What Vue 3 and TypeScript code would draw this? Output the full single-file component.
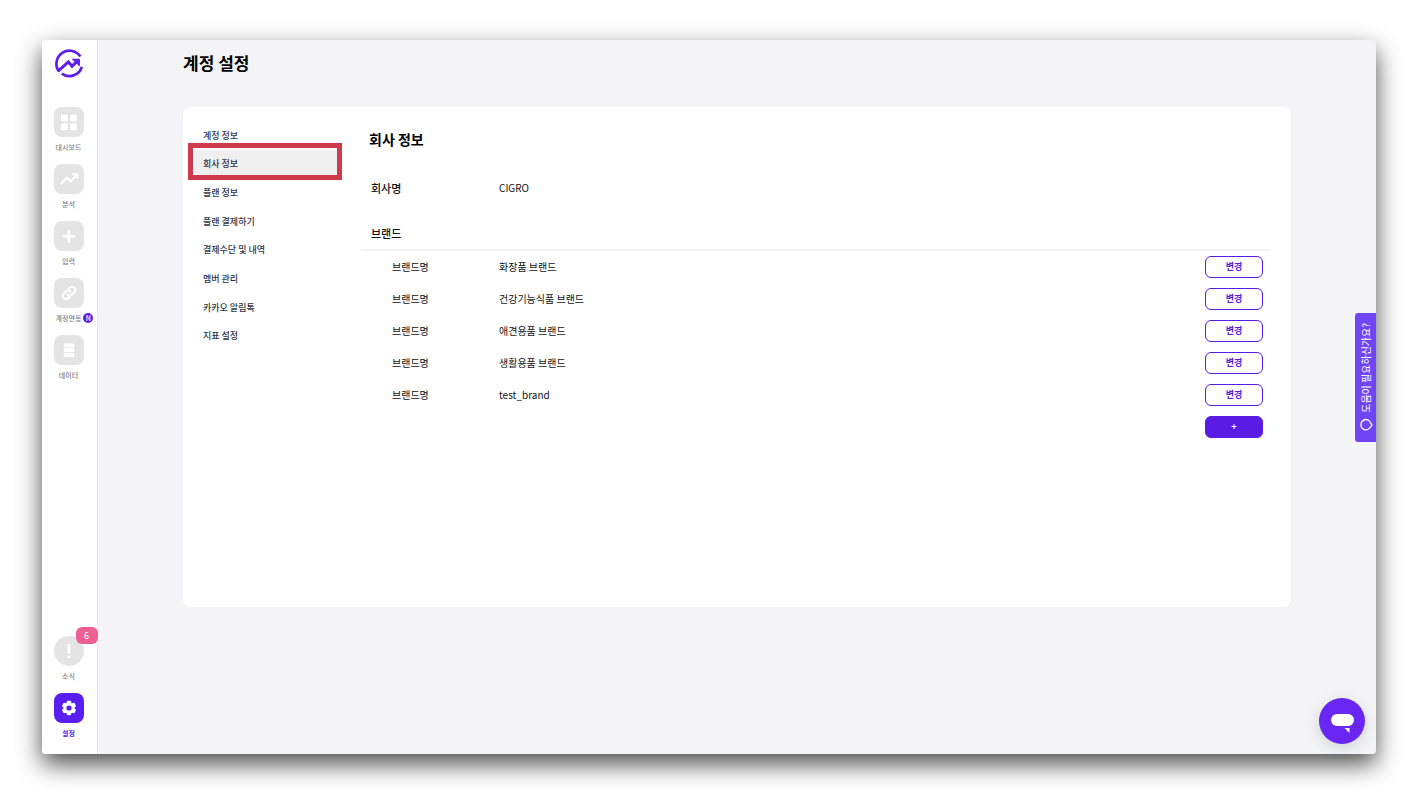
<script setup lang="ts">
import { ref } from 'vue'

interface NavItem {
  id: string
  label: string
  isNew?: boolean
}

const navItems: NavItem[] = [
  { id: 'dashboard', label: '대시보드' },
  { id: 'analysis', label: '분석' },
  { id: 'input', label: '입력' },
  { id: 'link', label: '계정연동', isNew: true },
  { id: 'data', label: '데이터' },
]

const menu: string[] = [
  '계정 정보',
  '회사 정보',
  '플랜 정보',
  '플랜 결제하기',
  '결제수단 및 내역',
  '멤버 관리',
  '카카오 알림톡',
  '지표 설정',
]
const current = ref('회사 정보')

const company = 'CIGRO'
const brands: string[] = ['화장품 브랜드', '건강기능식품 브랜드', '애견용품 브랜드', '생활용품 브랜드', 'test_brand']
</script>

<template>
  <div class="stage">
    <div class="window">
      <aside class="sidebar">
        <a class="logo" href="#" aria-label="홈">
          <svg viewBox="0 0 30 30" width="30" height="30" fill="none" stroke="#5c1ee8" stroke-width="2.7">
            <path d="M4.6 23A12.9 12.9 0 0 1 26.4 8.6" />
            <path d="M7.8 25.6A12.9 12.9 0 0 0 27.8 18.8" />
            <path d="M3.8 23.4L14.4 13.8L18 18.2L24.2 12.4" stroke-width="3" />
            <path d="M18.4 11.2H25.4V17.8Z" fill="#5c1ee8" stroke-width="1" />
          </svg>
        </a>

        <nav class="nav">
          <a v-for="item in navItems" :key="item.id" class="nav-item" href="#">
            <span class="tile">
              <svg v-if="item.id === 'dashboard'" viewBox="0 0 30 30" fill="#fff">
                <rect x="7" y="7.5" width="7" height="7" rx="1.8" />
                <rect x="16" y="7.5" width="7" height="7" rx="1.8" />
                <rect x="7" y="16.2" width="7" height="7" rx="1.8" />
                <rect x="16" y="16.2" width="7" height="7" rx="1.8" />
              </svg>
              <svg v-else-if="item.id === 'analysis'" viewBox="0 0 30 30" fill="none" stroke="#fff" stroke-width="2.2" stroke-linecap="round" stroke-linejoin="round">
                <path d="M7.5 19.5L12.6 13.6L17 17.4L22 11.4" />
                <path d="M18.6 10L23.4 9.6L23.6 14.4Z" fill="#fff" stroke-width="1.4" />
              </svg>
              <svg v-else-if="item.id === 'input'" viewBox="0 0 30 30" fill="none" stroke="#fff" stroke-width="2.6" stroke-linecap="round">
                <path d="M15 10V20.4M9.8 15.2H20.2" />
              </svg>
              <svg v-else-if="item.id === 'link'" viewBox="0 0 30 30" fill="none" stroke="#fff" stroke-width="2" stroke-linecap="round" stroke-linejoin="round">
                <path d="M13.6 16.5A3.2 3.2 0 0 0 18.2 16.5L20.4 14.3A3.25 3.25 0 0 0 15.8 9.7L14.5 11" />
                <path d="M16.4 13.5A3.2 3.2 0 0 0 11.8 13.5L9.6 15.7A3.25 3.25 0 0 0 14.2 20.3L15.5 19" />
              </svg>
              <svg v-else viewBox="0 0 30 30">
                <g fill="#fff">
                  <rect x="9.8" y="8.6" width="10.6" height="3.9" rx="1" />
                  <rect x="9.8" y="13.3" width="10.6" height="3.9" rx="1" />
                  <rect x="9.8" y="18" width="10.6" height="3.9" rx="1" />
                </g>
                <path d="M11.4 10.5H12.6M11.4 15.2H12.6M11.4 19.9H12.6" stroke="#e4e4e4" stroke-width="1" />
              </svg>
            </span>
            <span class="nav-label">{{ item.label }}<i v-if="item.isNew" class="new">N</i></span>
          </a>
        </nav>

        <div class="nav nav-bottom">
          <a class="nav-item" href="#">
            <span class="tile round">
              <svg viewBox="0 0 30 30" fill="none" stroke="#fff" stroke-width="2.8" stroke-linecap="round">
                <path d="M15 9.4V16.4M15 20.8V20.9" />
              </svg>
              <span class="count">6</span>
            </span>
            <span class="nav-label">소식</span>
          </a>
          <a class="nav-item active" href="#" aria-current="page">
            <span class="tile">
              <svg viewBox="0 0 30 30">
                <g fill="#fff">
                  <circle cx="15" cy="15" r="5.6" />
                  <rect x="12.7" y="7.8" width="4.6" height="14.4" rx="1.4" />
                  <rect x="12.7" y="7.8" width="4.6" height="14.4" rx="1.4" transform="rotate(60 15 15)" />
                  <rect x="12.7" y="7.8" width="4.6" height="14.4" rx="1.4" transform="rotate(120 15 15)" />
                </g>
                <circle cx="15" cy="15" r="2.6" fill="#5a1ff0" />
              </svg>
            </span>
            <span class="nav-label">설정</span>
          </a>
        </div>
      </aside>

      <main class="main">
        <h1>계정 설정</h1>
        <div class="panel">
          <ul class="menu">
            <li v-for="m in menu" :key="m">
              <button type="button" :class="{ selected: m === current }" @click="current = m">{{ m }}</button>
            </li>
          </ul>

          <section class="content">
            <h2>회사 정보</h2>
            <dl class="company">
              <dt>회사명</dt>
              <dd>{{ company }}</dd>
            </dl>
            <h3>브랜드</h3>
            <table class="brands">
              <tbody>
                <tr v-for="b in brands" :key="b">
                  <th scope="row">브랜드명</th>
                  <td>{{ b }}</td>
                  <td class="action"><button type="button" class="btn">변경</button></td>
                </tr>
                <tr>
                  <td class="action" colspan="3">
                    <button type="button" class="btn filled" aria-label="브랜드 추가">+</button>
                  </td>
                </tr>
              </tbody>
            </table>
          </section>
        </div>
      </main>

      <button type="button" class="help">
        <svg viewBox="0 0 14 14" width="14" height="14" fill="none" stroke="#fff" stroke-width="1.3" stroke-linejoin="round">
          <path d="M11.6 5A5 5.2 0 1 0 10.4 10.4L13 7.2Z" />
        </svg>
        <span>도움이 필요하신가요?</span>
      </button>

      <button type="button" class="chat" aria-label="채팅 상담">
        <svg viewBox="0 0 46 46" width="46" height="46" fill="#fff">
          <rect x="12" y="16" width="23" height="12" rx="6" />
          <path d="M25.5 30H30.5V35Z" />
        </svg>
      </button>
    </div>
  </div>
</template>

<style>
body {
  background: #fff;
}
</style>

<style scoped>
.stage {
  box-sizing: border-box;
  min-height: 100vh;
  padding: 40px 38px 50px 42px;
  display: flex;
  font-family: "Noto Sans CJK KR", "Noto Sans", sans-serif;
  font-size: 10px;
  color: #111;
}
.window {
  position: relative;
  flex: 1;
  display: flex;
  background: #f4f4f6;
  border-radius: 4px;
  box-shadow: 0 10px 24px rgba(0, 0, 0, 0.7);
}
button {
  font: inherit;
  cursor: pointer;
}
a {
  text-decoration: none;
}

.sidebar {
  box-sizing: border-box;
  width: 56px;
  flex: none;
  display: flex;
  flex-direction: column;
  align-items: center;
  padding: 8px 2px 16px 0;
  background: #fff;
  border-right: 1px solid #e7e3fa;
  border-radius: 4px 0 0 4px;
}
.logo,
.logo svg {
  display: block;
}
.nav {
  display: flex;
  flex-direction: column;
  gap: 12px;
  margin-top: 29px;
}
.nav-bottom {
  margin-top: auto;
}
.nav-item {
  display: flex;
  flex-direction: column;
  align-items: center;
  gap: 5px;
  color: #7c818c;
}
.tile {
  position: relative;
  width: 30px;
  height: 30px;
  border-radius: 8px;
  background: #e4e4e4;
}
.tile svg {
  display: block;
}
.round {
  border-radius: 50%;
}
.nav-label {
  position: relative;
  font-size: 7px;
  line-height: 10px;
  font-weight: 500;
  white-space: nowrap;
}
.new {
  position: absolute;
  left: 100%;
  top: 0;
  margin-left: 2px;
  width: 10px;
  height: 10px;
  border-radius: 50%;
  background: #5a1ff0;
  color: #fff;
  font-style: normal;
  text-align: center;
}
.count {
  position: absolute;
  left: 22px;
  top: -9px;
  width: 22px;
  border-radius: 6px;
  background: #ee5f93;
  color: #fff;
  font-size: 9px;
  line-height: 17px;
  text-align: center;
}
.active {
  color: #5a1ff0;
}
.active .nav-label {
  font-weight: 700;
}
.active .tile {
  background: #5a1ff0;
}

.main {
  flex: 1;
  min-width: 0;
  padding: 10px 85px 40px;
}
h1 {
  margin: 0;
  font-size: 17px;
  line-height: 26px;
  font-weight: 700;
  color: #000;
}
.panel {
  box-sizing: border-box;
  margin-top: 31px;
  min-height: 500px;
  padding: 14px 21px 14px 12px;
  display: grid;
  grid-template-columns: 144px 1fr;
  column-gap: 22px;
  align-items: start;
  background: #fff;
  border-radius: 8px;
}
.menu {
  list-style: none;
  margin: 0;
  padding: 0;
  height: 229px;
  display: grid;
  grid-auto-rows: 1fr;
}
.menu li {
  display: grid;
}
.menu button {
  position: relative;
  padding: 0 8px;
  border: 0;
  border-radius: 4px;
  background: none;
  color: #2f3440;
  font-size: 9px;
  font-weight: 500;
  text-align: left;
}
.menu .selected {
  background: #efefef;
}
.menu .selected::after {
  content: "";
  position: absolute;
  inset: -7px -3px -2px -7px;
  border: 5px solid #cf3a4c;
}

h2 {
  margin: 6px 0 0 8px;
  font-size: 14px;
  line-height: 24px;
  font-weight: 700;
  color: #000;
}
.company {
  display: flex;
  align-items: center;
  margin: 27px 0 0;
  line-height: 20px;
}
.company dt {
  width: 128px;
  padding-left: 10px;
  font-size: 11px;
  font-weight: 500;
}
.company dd {
  margin: 0;
}
h3 {
  margin: 25px 0 0;
  padding: 0 0 6px 10px;
  border-bottom: 2px solid #f2f2f2;
  font-size: 11px;
  line-height: 20px;
  font-weight: 500;
}
.brands {
  width: 100%;
  border-collapse: collapse;
}
.brands th,
.brands td {
  height: 32px;
  padding: 0;
  text-align: left;
  line-height: 20px;
}
.brands th {
  box-sizing: border-box;
  width: 138px;
  padding-left: 31px;
  font-weight: 400;
}
.brands .action {
  padding-right: 7px;
  text-align: right;
}
.btn {
  box-sizing: border-box;
  width: 58px;
  height: 22px;
  padding: 0;
  border: 1px solid #5a1be4;
  border-radius: 6px;
  background: #fff;
  color: #5a1be4;
  font-size: 9px;
  font-weight: 700;
  line-height: 18px;
  vertical-align: middle;
}
.filled {
  background: #5a1be4;
  color: #fff;
}

.help {
  position: absolute;
  right: 0;
  top: 273px;
  width: 21px;
  height: 129px;
  padding: 0;
  display: flex;
  flex-direction: column-reverse;
  align-items: center;
  justify-content: center;
  gap: 5px;
  border: 0;
  border-radius: 3px 0 0 3px;
  background: #6f45f6;
  color: #fff;
}
.help span {
  writing-mode: vertical-rl;
  text-orientation: sideways;
  transform: rotate(180deg);
  line-height: 20px;
  white-space: nowrap;
}
.chat {
  position: absolute;
  right: 11px;
  bottom: 10px;
  width: 46px;
  height: 46px;
  padding: 0;
  border: 0;
  border-radius: 50%;
  background: #6a26f3;
  box-shadow: 0 4px 14px rgba(60, 80, 100, 0.2);
}
.chat svg {
  display: block;
}
</style>
